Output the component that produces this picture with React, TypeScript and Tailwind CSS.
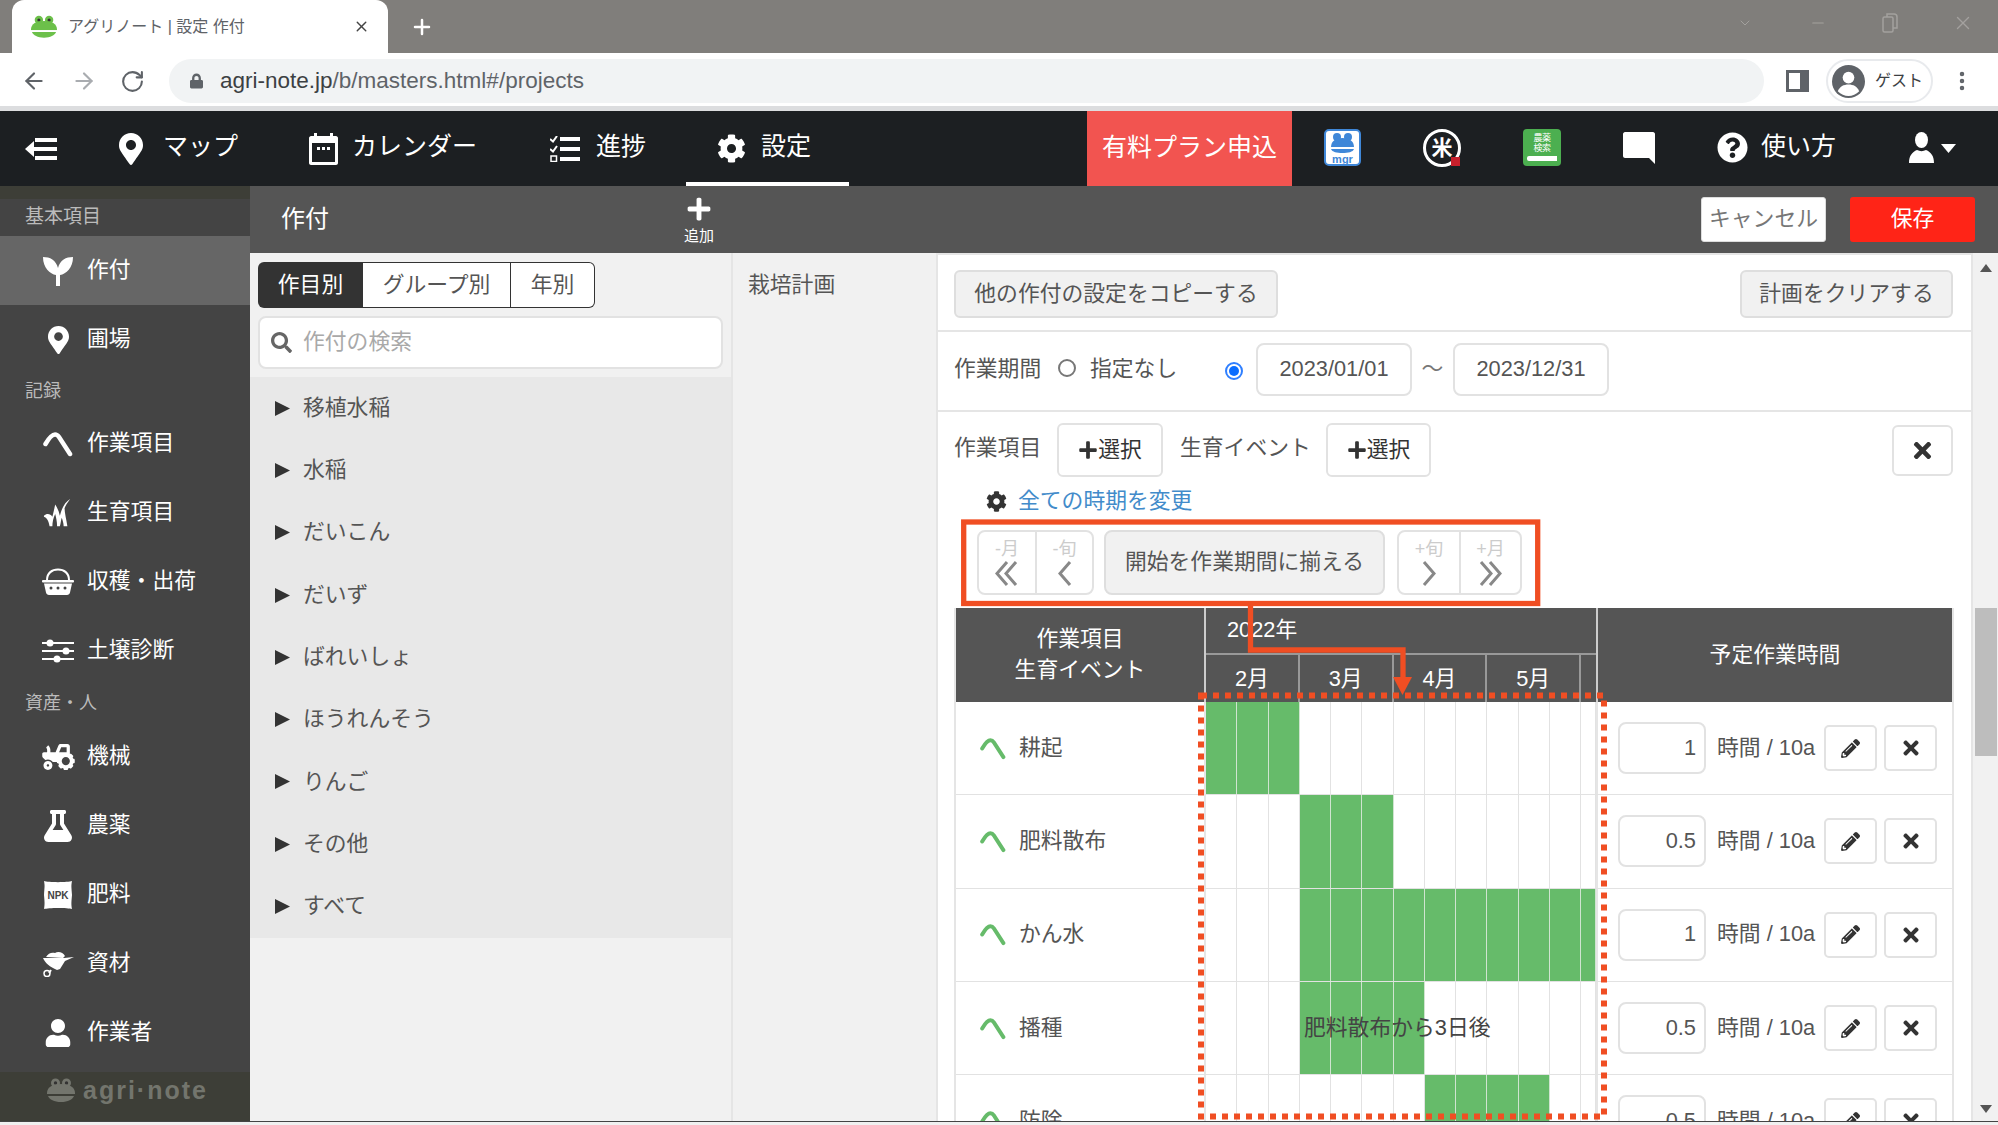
import React from 'react';
import { ArrowLeft, ArrowRight, RotateCw, Plus, X, Minus, ChevronDown, MoreVertical } from 'lucide-react';
import {
  FaCog,
  FaFlask,
  FaLock,
  FaMapMarkerAlt,
  FaPencilAlt,
  FaPlus,
  FaQuestionCircle,
  FaSearch,
  FaTimes,
  FaTractor,
  FaUser,
} from 'react-icons/fa';

const FONT = "font-['Liberation_Sans','Noto_Sans_CJK_JP',sans-serif]";

function Frog({ className, body = '#6cc04a', belly = '#ffffff' }: { className?: string; body?: string; belly?: string }) {
  return (
    <svg viewBox="0 0 28 24" className={className}>
      <circle cx="8.5" cy="5" r="4.5" fill={body} />
      <circle cx="19.5" cy="5" r="4.5" fill={body} />
      <circle cx="8.5" cy="5" r="1.7" fill="#333" />
      <circle cx="19.5" cy="5" r="1.7" fill="#333" />
      <path d="M0 15C0 9 6 6 14 6s14 3 14 9v1H0z" fill={body} />
      <path d="M0 16h28v1H0z" fill={belly} />
      <path d="M1 18h26c-1.5 3.5-6 6-13 6S2.500 21.500 1 18z" fill={body} />
    </svg>
  );
}

function Hoe({ className, color }: { className?: string; color: string }) {
  return (
    <svg viewBox="0 0 30 26" className={className}>
      <path d="M2.500 13C6 7 9 3.500 12 3.500c2 0 3 1 4 2.500L27 23" fill="none" stroke={color} strokeWidth="4.500" strokeLinecap="round" strokeLinejoin="round" />
    </svg>
  );
}

function Sprout() {
  return (
    <svg viewBox="0 0 32 32" className="w-[32px] h-[32px]">
      <path d="M14 31V20C8 19 1 13 1 2c7 0 13 3 15 11 2-8 8-11 15-11 0 11-7 17-13 18v11z" fill="#fff" />
    </svg>
  );
}

function Grass() {
  return (
    <svg viewBox="0 0 32 28" className="w-[30px] h-[28px]">
      <path d="M1 18c3 1 5 4 6 10h3c0-4 1-9 3-13 1 4 2 8 2 13h3c1-3 1-6 2-9 1 3 2 6 2 9h4c-1-7-3-14-3-19 1-3 3-6 6-10-5 3-9 9-11 18-1-5-3-9-5-12-1 5-2 9-3 13-2-3-6-4-9-1z" fill="#fff" />
    </svg>
  );
}

function Basket() {
  return (
    <svg viewBox="0 0 32 28" className="w-[32px] h-[28px]">
      <path d="M5 12C5 5 10 1.500 16 1.500S27 5 27 12" fill="none" stroke="#fff" strokeWidth="2" />
      <rect x="0" y="12" width="32" height="2.500" rx="1" fill="#fff" />
      <path d="M2 15.500h28l-2 9c-.3 1.500-1.500 2.500-3 2.500H7c-1.500 0-2.700-1-3-2.500z" fill="#fff" />
      <g fill="#444">
        <circle cx="9" cy="20" r="1.500" />
        <circle cx="16" cy="20" r="1.500" />
        <circle cx="23" cy="20" r="1.500" />
      </g>
    </svg>
  );
}

function Sliders() {
  return (
    <svg viewBox="0 0 32 24" className="w-[32px] h-[24px]">
      <g fill="#fff">
        <rect x="0" y="3" width="32" height="2" />
        <rect x="0" y="11" width="32" height="2" />
        <rect x="0" y="19" width="32" height="2" />
        <circle cx="8" cy="4" r="3.500" />
        <circle cx="24" cy="12" r="3.500" />
        <circle cx="15" cy="20" r="3.500" />
      </g>
    </svg>
  );
}

function NpkBag() {
  return (
    <svg viewBox="0 0 30 28" className="w-[30px] h-[28px]">
      <path d="M1 0c4 1.500 24 1.500 28 0-1 5-.5 6 0 14-.5 6-1 9 0 14-4-1.500-24-1.500-28 0 1-5 .5-8 0-14C1.500 6 2 5 1 0z" fill="#fff" />
      <text x="15" y="18" textAnchor="middle" fontSize="10" fontWeight="700" fontFamily="Liberation Sans" fill="#444">NPK</text>
    </svg>
  );
}

function Wheelbarrow() {
  return (
    <svg viewBox="0 0 32 26" className="w-[32px] h-[26px]">
      <path d="M4 6c2-4 6-5 9-4 3-2 8-1 10 3l-2 2z" fill="#fff" />
      <path d="M1 7h21l10-1-9 4-5 8-3 1C8 16 3 12 1 7z" fill="#fff" />
      <path d="M9 19l-2 3" stroke="#fff" strokeWidth="2" />
      <circle cx="5" cy="22.500" r="3" fill="none" stroke="#fff" strokeWidth="1.500" />
    </svg>
  );
}

function Person({ className }: { className?: string }) {
  return (
    <svg viewBox="0 0 25 31" className={className}>
      <ellipse cx="12.500" cy="8" rx="6.500" ry="8" fill="#fff" />
      <path d="M0 31c0-7 3-11 8-13 3 1.500 6 1.500 9 0 5 2 8 6 8 13z" fill="#fff" />
    </svg>
  );
}

function BackMenu() {
  return (
    <svg viewBox="0 0 32 24" className="w-[32px] h-[24px]">
      <g fill="#fff">
        <rect x="10" y="1" width="22" height="4" />
        <rect x="6" y="10" width="26" height="4" />
        <rect x="10" y="19" width="22" height="4" />
        <path d="M0 12l9-8v16z" />
      </g>
    </svg>
  );
}

function Calendar() {
  return (
    <svg viewBox="0 0 29 32" className="w-[29px] h-[32px]">
      <path d="M5 0h3v3h13V0h3v3h3c1 0 2 1 2 2v25c0 1-1 2-2 2H2c-1 0-2-1-2-2V5c0-1 1-2 2-2h3z" fill="#fff" />
      <rect x="3" y="10" width="23" height="19" fill="#1c1f22" />
      <g fill="#fff">
        <rect x="8" y="14" width="3" height="3" />
        <rect x="13" y="14" width="3" height="3" />
        <rect x="18" y="14" width="3" height="3" />
      </g>
    </svg>
  );
}

function Tasks() {
  return (
    <svg viewBox="0 0 30 26" className="w-[30px] h-[26px]">
      <g fill="#fff">
        <rect x="10" y="1" width="20" height="4" />
        <rect x="10" y="11" width="20" height="4" />
        <rect x="10" y="21" width="20" height="4" />
      </g>
      <path d="M0 3l3 2.500L7 0M0 13l3 2.500L7 10" fill="none" stroke="#fff" strokeWidth="2" />
      <rect x="1" y="20" width="5.500" height="5.500" fill="none" stroke="#fff" strokeWidth="1.500" />
    </svg>
  );
}

function SideLabel({ children, height, className = '' }: { children: React.ReactNode; height: string; className?: string }) {
  return <div className={`flex items-center pl-[25px] text-[18px] text-[#bbbbbb] ${height} ${className}`}>{children}</div>;
}

function SideItem({ icon, label, active }: { icon: React.ReactNode; label: string; active?: boolean }) {
  return (
    <div className={`h-[69px] flex items-center pl-[40px] text-[21.8px] text-white ${active ? 'bg-[#666666]' : ''}`}>
      <div className="w-[36px] flex justify-center">{icon}</div>
      <span className="ml-[11px]">{label}</span>
    </div>
  );
}

function ChromeBar() {
  return (
    <>
      <div className="h-[53px] bg-[#807e7b] flex items-end pl-[12px] text-[#5f6368]">
        <div className="w-[376px] h-[53px] bg-white rounded-t-[12px] flex items-center pl-[19px]">
          <Frog className="w-[26px] h-[23px]" />
          <span className="ml-[11px] w-[285px] text-[16px] text-[#5f6368] whitespace-nowrap">アグリノート | 設定 作付</span>
          <X className="w-[17px] h-[17px] text-[#444]" strokeWidth={2} />
        </div>
        <div className="ml-[22px] h-[53px] flex items-center">
          <Plus className="w-[24px] h-[24px] text-white" strokeWidth={2.5} />
        </div>
        <div className="ml-auto h-[46px] self-start flex items-center pr-[24px] text-[#a3a19e]">
          <ChevronDown className="w-[16px] h-[16px]" strokeWidth={1.500} />
          <Minus className="w-[18px] h-[18px] ml-[56px]" strokeWidth={1.500} />
          <svg viewBox="0 0 16 20" className="w-[16px] h-[20px] ml-[55px]" fill="none" stroke="currentColor" strokeWidth="1.500">
            <rect x="1" y="4" width="10" height="15" rx="1.500" />
            <path d="M5 4V1h7c1.500 0 3 1 3 3v11h-4" />
          </svg>
          <X className="w-[22px] h-[22px] ml-[54px]" strokeWidth={1.500} />
        </div>
      </div>
      <div className="h-[53px] bg-white flex items-center pt-[3px] text-[#5f6368]">
        <ArrowLeft className="w-[26px] h-[26px] ml-[21px]" strokeWidth={2} />
        <ArrowRight className="w-[26px] h-[26px] ml-[24px] text-[#a9acb0]" strokeWidth={2} />
        <RotateCw className="w-[25px] h-[25px] ml-[23px]" strokeWidth={2} />
        <div className="ml-[24px] w-[1595px] h-[44px] rounded-[22px] bg-[#f1f3f4] flex items-center pl-[21px]">
          <FaLock className="w-[13px] h-[16px]" />
          <span className="ml-[17px] text-[22.5px] leading-none text-[#3c4043]">
            agri-note.jp<span className="text-[#5f6368]">/b/masters.html#/projects</span>
          </span>
        </div>
        <svg viewBox="0 0 23 22" className="w-[23px] h-[22px] ml-[22px]">
          <rect x="1.500" y="1.500" width="20" height="19" fill="none" stroke="#5f6368" strokeWidth="3" />
          <rect x="14" y="1.500" width="7.500" height="19" fill="#5f6368" />
        </svg>
        <div className="ml-[17px] w-[107px] h-[44px] rounded-[22px] border-2 border-[#e8eaed] flex items-center pl-[4px]">
          <svg viewBox="0 0 34 34" className="w-[33px] h-[33px] shrink-0">
            <circle cx="17" cy="17" r="17" fill="#5f6368" />
            <circle cx="17" cy="13" r="6" fill="#fff" />
            <path d="M6 27c2-5 6-7 11-7s9 2 11 7c-3 3-7 5-11 5s-8-2-11-5z" fill="#fff" />
          </svg>
          <span className="ml-[10px] text-[16px] text-[#3c4043] whitespace-nowrap">ゲスト</span>
        </div>
        <MoreVertical className="w-[24px] h-[24px] ml-[17px]" strokeWidth={2.500} />
      </div>
      <div className="h-[5px] bg-[#dcdddf]" />
    </>
  );
}

function TopNavItem({ width, pad, gap, icon, label, active }: { width: string; pad: string; gap: string; icon: React.ReactNode; label: string; active?: boolean }) {
  return (
    <div className={`relative h-full flex items-center text-[25px] text-white ${width} ${pad}`}>
      {icon}
      <span className={`-mt-[4px] whitespace-nowrap ${gap}`}>{label}</span>
      {active && <div className="absolute left-0 right-0 bottom-0 h-[4px] bg-white" />}
    </div>
  );
}

function TopNav() {
  return (
    <div className="h-[75px] bg-[#1c1f22] flex items-center">
      <div className="w-[90px] pl-[25px]">
        <BackMenu />
      </div>
      <TopNavItem width="w-[195px]" pad="pl-[29px]" gap="ml-[20px]" icon={<FaMapMarkerAlt className="w-[24px] h-[34px] text-white" />} label="マップ" />
      <TopNavItem width="w-[242px]" pad="pl-[24px]" gap="ml-[14px]" icon={<Calendar />} label="カレンダー" />
      <TopNavItem width="w-[159px]" pad="pl-[23px]" gap="ml-[16px]" icon={<Tasks />} label="進捗" />
      <TopNavItem width="w-[163px]" pad="pl-[31px]" gap="ml-[15px]" icon={<FaCog className="w-[29px] h-[29px] text-white" />} label="設定" active />
      <div className="ml-[238px] w-[205px] h-full bg-[#f25450] flex items-center justify-center pb-[2px] text-[25px] text-white whitespace-nowrap">有料プラン申込</div>

      <svg viewBox="0 0 37 37" className="w-[37px] h-[37px] ml-[32px] -mt-[2px]">
        <rect x="1" y="1" width="35" height="35" rx="4" fill="#fff" stroke="#3f87d8" strokeWidth="2" />
        <circle cx="13" cy="8" r="4" fill="#3f87d8" />
        <circle cx="24" cy="8" r="4" fill="#3f87d8" />
        <path d="M7 18c0-6 5-9 11.500-9S30 12 30 18z" fill="#3f87d8" />
        <path d="M7 20h23c-1 3-6 4-11.500 4S8 23 7 20z" fill="#3f87d8" />
        <text x="18.500" y="34" textAnchor="middle" fontSize="11" fontWeight="700" fontFamily="Liberation Sans" fill="#3f87d8">mgr</text>
      </svg>

      <div className="relative w-[38px] h-[38px] ml-[62px] -mt-[2px] rounded-full border-[3px] border-white flex items-center justify-center text-[21px] font-bold text-white">
        米
        <div className="absolute -right-[2px] -bottom-[2px] w-[9px] h-[9px] bg-[#c8202c]" />
      </div>

      <div className="w-[38px] h-[37px] ml-[62px] -mt-[2px] rounded-[4px] bg-[#4caf50] flex flex-col items-center pt-[4px]">
        <span className="text-[9px] leading-[10px] text-white tracking-tighter">農薬</span>
        <span className="text-[9px] leading-[10px] text-white tracking-tighter">検索</span>
        <div className="w-[30px] h-[5px] mt-[3px] bg-white rounded-l-[2px]" />
      </div>

      <svg viewBox="0 0 32 32" className="w-[32px] h-[32px] ml-[62px] -mt-[2px]">
        <path d="M2 0h28c1 0 2 1 2 2v30l-6-6H2c-1 0-2-1-2-2V2C0 1 1 0 2 0z" fill="#fff" />
      </svg>

      <FaQuestionCircle className="w-[31px] h-[31px] ml-[62px] -mt-[2px] text-white" />
      <span className="ml-[13px] -mt-[4px] w-[75px] text-[25px] text-white whitespace-nowrap">使い方</span>
      <Person className="w-[25px] h-[31px] ml-[73px] -mt-[2px]" />
      <svg viewBox="0 0 15 9" className="w-[15px] h-[9px] ml-[7px]">
        <path d="M0 0h15l-7.500 9z" fill="#fff" />
      </svg>
    </div>
  );
}

function Sidebar() {
  return (
    <div className="w-[250px] shrink-0 bg-[#444444] flex flex-col">
      <div className="h-[13px] bg-[#3d3e37]" />
      <SideLabel height="h-[37px]" className="text-[19px]">基本項目</SideLabel>
      <SideItem active icon={<Sprout />} label="作付" />
      <SideItem icon={<FaMapMarkerAlt className="w-[21px] h-[28px] text-white" />} label="圃場" />
      <SideLabel height="h-[35px]">記録</SideLabel>
      <SideItem icon={<Hoe className="w-[30px] h-[26px]" color="#fff" />} label="作業項目" />
      <SideItem icon={<Grass />} label="生育項目" />
      <SideItem icon={<Basket />} label="収穫・出荷" />
      <SideItem icon={<Sliders />} label="土壌診断" />
      <SideLabel height="h-[37px]">資産・人</SideLabel>
      <SideItem icon={<FaTractor className="w-[33px] h-[26px] text-white -scale-x-100" />} label="機械" />
      <SideItem icon={<FaFlask className="w-[32px] h-[32px] text-white" />} label="農薬" />
      <SideItem icon={<NpkBag />} label="肥料" />
      <SideItem icon={<Wheelbarrow />} label="資材" />
      <SideItem icon={<FaUser className="w-[26px] h-[28px] text-white" />} label="作業者" />
      <div className="mt-auto h-[49px] bg-[#3d3e37] flex items-start pt-[6px] pl-[47px]">
        <Frog className="w-[28px] h-[24px]" body="#73756d" belly="#3d3e37" />
        <span className="ml-[8px] -mt-[6px] text-[25px] font-bold tracking-[2px] text-[#73756d] font-['Liberation_Sans',sans-serif]">agri·note</span>
      </div>
    </div>
  );
}

const CROPS = ['移植水稲', '水稲', 'だいこん', 'だいず', 'ばれいしょ', 'ほうれんそう', 'りんご', 'その他', 'すべて'];

function CropList() {
  return (
    <div className="w-[481px] shrink-0 bg-[#f1f1f1] flex flex-col">
      <div className="h-[124px] pl-[8px] pt-[9px]">
        <div className="flex w-[337px] h-[46px] text-[21.8px]">
          <div className="w-[105px] bg-[#333333] text-white rounded-l-[6px] flex items-center justify-center">作目別</div>
          <div className="w-[148px] bg-white text-[#555555] border border-[#333333] border-l-0 flex items-center justify-center">グループ別</div>
          <div className="w-[84px] bg-white text-[#555555] border border-[#333333] border-l-0 rounded-r-[6px] flex items-center justify-center">年別</div>
        </div>
        <div className="mt-[8px] w-[465px] h-[53px] bg-white border-2 border-[#e2e2e2] rounded-[8px] flex items-center pl-[11px]">
          <FaSearch className="w-[21px] h-[21px] text-[#666666]" />
          <span className="ml-[11px] text-[21.8px] text-[#a9a9a9]">作付の検索</span>
        </div>
      </div>
      <div className="bg-[#e8e8e8]">
        {CROPS.map((name) => (
          <div key={name} className="h-[62.300px] flex items-center pl-[25px] text-[21.8px] text-[#555555]">
            <svg viewBox="0 0 15 15" className="w-[15px] h-[15px]">
              <path d="M0 0l15 7.500L0 15z" fill="#333" />
            </svg>
            <span className="ml-[13px]">{name}</span>
          </div>
        ))}
      </div>
    </div>
  );
}

function Chevron({ dir, double }: { dir: 'left' | 'right'; double?: boolean }) {
  const d = dir === 'left' ? 'M12 1L2 12.500 12 24' : 'M2 1l10 11.500L2 24';
  return (
    <svg viewBox={double ? '0 0 24 26' : '0 0 14 26'} className={double ? 'w-[24px] h-[26px]' : 'w-[14px] h-[26px]'} fill="none" stroke="#888888" strokeWidth="3">
      <path d={d} />
      {double && <path d={d} transform="translate(9 0)" />}
    </svg>
  );
}

function ShiftButton({ label, dir, double, className }: { label: string; dir: 'left' | 'right'; double?: boolean; className: string }) {
  return (
    <div className={`h-full flex flex-col items-center pt-[5px] ${className}`}>
      <span className="text-[18px] leading-[24px] text-[#cccccc]">{label}</span>
      <Chevron dir={dir} double={double} />
    </div>
  );
}

const ROWS = [
  { name: '耕起', hours: '1', from: 0, to: 2 },
  { name: '肥料散布', hours: '0.5', from: 3, to: 5 },
  { name: 'かん水', hours: '1', from: 3, to: 12 },
  { name: '播種', hours: '0.5', from: 3, to: 6, note: '肥料散布から3日後' },
  { name: '防除', hours: '0.5', from: 7, to: 10 },
];

const CELLS = Array.from({ length: 13 }, (_, i) => i);

function GanttRow({ row }: { row: (typeof ROWS)[number] }) {
  return (
    <div className="flex h-[93.330px] shrink-0 border-b border-[#e2e2e2]">
      <div className="w-[248px] shrink-0 flex items-center pl-[24px] text-[21.8px] text-[#555555]">
        <Hoe className="w-[26px] h-[25px]" color="#66bb6a" />
        <span className="ml-[13px]">{row.name}</span>
      </div>
      <div className="relative w-[394px] shrink-0 flex border-x-2 border-[#e5e5e5]">
        {CELLS.map((i) => {
          const on = i >= row.from && i <= row.to;
          return (
            <div
              key={i}
              className={`${i === 12 ? 'w-[15px]' : 'w-[31.250px]'} h-full shrink-0 border-r ${
                on ? 'bg-[#66bb6a] border-[#d0e4d0]' : 'border-[#e2e2e2]'
              }`}
            />
          );
        })}
        {row.note && (
          <span className="absolute left-[98px] top-[30px] text-[21.8px] text-[#444444] whitespace-nowrap">{row.note}</span>
        )}
      </div>
      <div className="flex items-center pl-[20px]">
        <div className="w-[88px] h-[52px] border-2 border-[#e2e2e2] rounded-[8px] flex items-center justify-end pr-[8px] text-[21.8px] text-[#555555]">
          {row.hours}
        </div>
        <span className="ml-[11px] w-[107px] text-[21.8px] text-[#555555] whitespace-nowrap">時間 / 10a</span>
        <div className="w-[53px] h-[46px] border-2 border-[#e2e2e2] rounded-[5px] flex items-center justify-center">
          <FaPencilAlt className="w-[19px] h-[19px] text-[#333333]" />
        </div>
        <div className="ml-[7px] w-[53px] h-[46px] border-2 border-[#e2e2e2] rounded-[5px] flex items-center justify-center">
          <FaTimes className="w-[22px] h-[22px] text-[#333333]" />
        </div>
      </div>
    </div>
  );
}

function GanttTable() {
  return (
    <div className="mt-[13px] ml-[16px] w-[1000px] border-x-2 border-[#e5e5e5]">
      <div className="flex h-[94px] bg-[#555555] text-[21.8px] text-white">
        <div className="w-[248px] shrink-0 flex flex-col items-center justify-center leading-[31px] pb-[2px]">
          <span>作業項目</span>
          <span>生育イベント</span>
        </div>
        <div className="w-[394px] shrink-0 border-x-2 border-[#cccccc]">
          <div className="h-[47px] pl-[21px] flex items-center border-b-2 border-[#999999]">2022年</div>
          <div className="flex h-[47px]">
            {['2月', '3月', '4月', '5月'].map((m) => (
              <div key={m} className="w-[93.750px] shrink-0 flex items-center justify-center pt-[2px] border-r-2 border-[#999999]">
                {m}
              </div>
            ))}
          </div>
        </div>
        <div className="flex-1 flex items-center justify-center">予定作業時間</div>
      </div>
      {ROWS.map((row) => (
        <GanttRow key={row.name} row={row} />
      ))}
    </div>
  );
}

function Editor() {
  return (
    <div className="flex-1 min-w-0 bg-white text-[21.8px] text-[#555555] overflow-hidden">
      <div className="h-[79px] flex items-start justify-between pt-[15px] pl-[16px] pr-[18px] border-t-2 border-[#e5e5e5] border-b-2 border-b-[#e5e5e5]">
        <div className="w-[324px] h-[48px] bg-[#f1f1f1] border-2 border-[#dedede] rounded-[6px] flex items-center justify-center whitespace-nowrap">他の作付の設定をコピーする</div>
        <div className="w-[213px] h-[48px] bg-[#f1f1f1] border-2 border-[#dedede] rounded-[6px] flex items-center justify-center whitespace-nowrap">計画をクリアする</div>
      </div>
      <div className="h-[80px] flex items-center pb-[3px] pl-[16px] border-b-2 border-[#e5e5e5]">
        <span className="w-[104px]">作業期間</span>
        <div className="w-[18px] h-[18px] rounded-full border-2 border-[#777777] -mt-[4px]" />
        <span className="ml-[14px] w-[135px]">指定なし</span>
        <div className="w-[18px] h-[18px] mt-[3px] rounded-full border-2 border-[#2f7fff] flex items-center justify-center">
          <div className="w-[10px] h-[10px] rounded-full bg-[#0a6cff]" />
        </div>
        <div className="ml-[13px] w-[156px] h-[53px] border-2 border-[#e2e2e2] rounded-[8px] flex items-center justify-center">2023/01/01</div>
        <span className="w-[41px] text-center text-[#777777]">～</span>
        <div className="w-[156px] h-[53px] border-2 border-[#e2e2e2] rounded-[8px] flex items-center justify-center">2023/12/31</div>
      </div>
      <div className="flex items-center h-[54px] mt-[11px] pl-[16px] pr-[18px]">
        <span className="w-[103px] -mt-[4px]">作業項目</span>
        <div className="w-[106px] h-[54px] border-2 border-[#e2e2e2] rounded-[6px] flex items-center justify-center text-[#333333]">
          <FaPlus className="w-[20px] h-[20px]" />
          選択
        </div>
        <span className="ml-[17px] w-[146px] -mt-[4px] whitespace-nowrap">生育イベント</span>
        <div className="w-[105px] h-[54px] border-2 border-[#e2e2e2] rounded-[6px] flex items-center justify-center text-[#333333]">
          <FaPlus className="w-[20px] h-[20px]" />
          選択
        </div>
        <div className="ml-auto w-[61px] h-[51px] border-2 border-[#e2e2e2] rounded-[6px] flex items-center justify-center">
          <FaTimes className="w-[25px] h-[25px] text-[#333333]" />
        </div>
      </div>
      <div className="flex items-center h-[24px] mt-[12px] pl-[48px]">
        <FaCog className="w-[21px] h-[21px] text-[#333333]" />
        <span className="ml-[11px] text-[#428bca]">全ての時期を変更</span>
      </div>
      <div className="flex h-[65px] mt-[17px] pl-[39px]">
        <div className="flex w-[117px] border-2 border-[#e2e2e2] rounded-[8px]">
          <ShiftButton label="-月" dir="left" double className="w-[58px] border-r-2 border-[#e2e2e2]" />
          <ShiftButton label="-旬" dir="left" className="flex-1" />
        </div>
        <div className="ml-[10px] w-[281px] bg-[#f1f1f1] border-2 border-[#dedede] rounded-[8px] flex items-center justify-center whitespace-nowrap">開始を作業期間に揃える</div>
        <div className="ml-[12px] flex w-[125px] border-2 border-[#e2e2e2] rounded-[8px]">
          <ShiftButton label="+旬" dir="right" className="w-[62px] border-r-2 border-[#e2e2e2]" />
          <ShiftButton label="+月" dir="right" double className="flex-1" />
        </div>
      </div>
      <GanttTable />
    </div>
  );
}

function Annotations() {
  return (
    <svg viewBox="0 0 1998 1125" className="absolute inset-0 w-[1998px] h-[1125px] pointer-events-none">
      <g fill="none" stroke="#f04e23">
        <rect x="963.700" y="522" width="574" height="81.500" strokeWidth="5.300" />
        <path d="M1250.500 606V650H1403V680" strokeWidth="5.300" />
        <path d="M1201 695.500H1604V1116.500H1201z" strokeWidth="6" strokeDasharray="6 6" />
      </g>
      <path d="M1393 677h19l-9.500 18z" fill="#f04e23" />
    </svg>
  );
}

export default function App() {
  return (
    <div className={`relative w-[1998px] h-[1125px] overflow-hidden bg-[#f0f0f0] flex flex-col ${FONT}`}>
      <ChromeBar />
      <TopNav />
      <div className="h-[935px] flex">
        <Sidebar />
        <div className="flex-1 min-w-0 flex flex-col">
          <div className="h-[67px] shrink-0 bg-[#555555] flex items-center text-white">
            <span className="ml-[31px] -mt-[2px] text-[24px]">作付</span>
            <div className="ml-[354px] w-[32px] flex flex-col items-center">
              <FaPlus className="w-[26px] h-[26px]" />
              <span className="mt-[5px] text-[15px] leading-[17px] whitespace-nowrap">追加</span>
            </div>
            <div className="ml-auto w-[125px] h-[45px] bg-white rounded-[3px] border border-[#dddddd] flex items-center justify-center text-[21.8px] text-[#777777]">キャンセル</div>
            <div className="ml-[24px] mr-[23px] w-[125px] h-[45px] bg-[#ff2417] rounded-[3px] flex items-center justify-center text-[21.8px]">保存</div>
          </div>
          <div className="flex-1 min-h-0 flex">
            <CropList />
            <div className="w-[207px] shrink-0 bg-[#f1f1f1] border-x-2 border-[#e5e5e5] pl-[15px] pt-[16px] text-[21.8px] text-[#555555]">栽培計画</div>
            <Editor />
            <div className="w-[27px] shrink-0 bg-[#f1f1f1] border-l-2 border-[#e5e5e5] flex flex-col items-center">
              <svg viewBox="0 0 12 8" className="w-[12px] h-[8px] mt-[11px]">
                <path d="M6 0l6 8H0z" fill="#555" />
              </svg>
              <div className="w-[22px] h-[148px] mt-[336px] bg-[#bdbdbd]" />
              <svg viewBox="0 0 12 8" className="w-[12px] h-[8px] mt-[349px]">
                <path d="M6 8l6-8H0z" fill="#555" />
              </svg>
            </div>
          </div>
        </div>
      </div>
      <div className="h-[1px] bg-[#444444]" />
      <Annotations />
    </div>
  );
}
